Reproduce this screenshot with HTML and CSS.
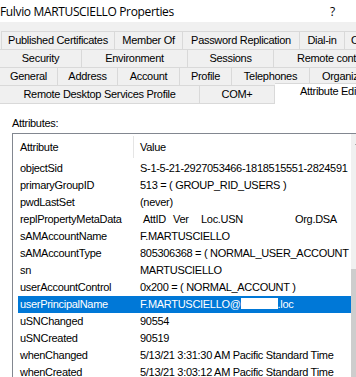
FILE: index.html
```html
<!DOCTYPE html>
<html>
<head>
	<title>Fulvio MARTUSCIELLO Properties</title>
	<link rel="stylesheet" href="styles.css">
</head>
<body>
	<div class="dialog">
		<div class="titlebar">
			<span class="title">Fulvio MARTUSCIELLO Properties</span>
			<span class="help">?</span>
		</div>

		<div class="tabs">
			<div class="tabrow row1">
				<div class="tab w-pub">Published Certificates</div>
				<div class="tab w-mem">Member Of</div>
				<div class="tab w-pwd">Password Replication</div>
				<div class="tab w-dial">Dial-in</div>
				<div class="tab cut pad-obj">Object</div>
			</div>
			<div class="tabrow">
				<div class="tab w-sec">Security</div>
				<div class="tab w-env">Environment</div>
				<div class="tab w-ses">Sessions</div>
				<div class="tab cut pad-rc">Remote control</div>
			</div>
			<div class="tabrow">
				<div class="tab w-gen">General</div>
				<div class="tab w-addr">Address</div>
				<div class="tab w-acc">Account</div>
				<div class="tab w-prof">Profile</div>
				<div class="tab w-tel">Telephones</div>
				<div class="tab cut pad-org">Organization</div>
			</div>
			<div class="tabrow">
				<div class="tab w-rds">Remote Desktop Services Profile</div>
				<div class="tab w-com">COM+</div>
				<div class="tab cut selected pad-attr">Attribute Editor</div>
			</div>
		</div>

		<div class="page">
			<div class="label">Attributes:</div>
			<div class="listview">
				<div class="lv-body">
					<div class="lv-header">
						<div class="hcol first">Attribute</div>
						<div class="hsep"></div>
						<div class="hcol">Value</div>
					</div>
					<div class="lv-row"><div class="c1">objectSid</div><div class="c2">S-1-5-21-2927053466-1818515551-2824591</div></div>
					<div class="lv-row"><div class="c1">primaryGroupID</div><div class="c2">513 = ( GROUP_RID_USERS )</div></div>
					<div class="lv-row"><div class="c1">pwdLastSet</div><div class="c2">(never)</div></div>
					<div class="lv-row"><div class="c1">replPropertyMetaData</div><div class="c2 meta"><span class="m-att">AttID</span><span class="m-ver">Ver</span><span class="m-usn">Loc.USN</span><span>Org.DSA</span></div></div>
					<div class="lv-row"><div class="c1">sAMAccountName</div><div class="c2">F.MARTUSCIELLO</div></div>
					<div class="lv-row"><div class="c1">sAMAccountType</div><div class="c2">805306368 = ( NORMAL_USER_ACCOUNT )</div></div>
					<div class="lv-row"><div class="c1">sn</div><div class="c2">MARTUSCIELLO</div></div>
					<div class="lv-row"><div class="c1">userAccountControl</div><div class="c2">0x200 = ( NORMAL_ACCOUNT )</div></div>
					<div class="lv-row active"><div class="c1">userPrincipalName</div><div class="c2">F.MARTUSCIELLO@<span class="redact"></span>.loc</div></div>
					<div class="lv-row"><div class="c1">uSNChanged</div><div class="c2">90554</div></div>
					<div class="lv-row"><div class="c1">uSNCreated</div><div class="c2">90519</div></div>
					<div class="lv-row"><div class="c1">whenChanged</div><div class="c2">5/13/21 3:31:30 AM Pacific Standard Time</div></div>
					<div class="lv-row"><div class="c1">whenCreated</div><div class="c2">5/13/21 3:03:12 AM Pacific Standard Time</div></div>
				</div>
				<div class="vscroll">
					<div class="sb-btn">
						<svg width="9" height="5" viewBox="0 0 9 5"><path d="M0.5 4.5 L4.5 0.5 L8.5 4.5" fill="none" stroke="#606060" stroke-width="1"/></svg>
					</div>
					<div class="sb-track"></div>
					<div class="sb-thumb"></div>
				</div>
			</div>
		</div>
	</div>
</body>
</html>
```

FILE: styles.css
```css
html, body {
	margin: 0;
	padding: 0;
	width: 356px;
	height: 377px;
	overflow: hidden;
	background-color: #ffffff;
}

body {
	font-family: "Liberation Sans", Arial, sans-serif;
	font-size: 11px;
	letter-spacing: -0.3px;
	color: #000000;
}

.dialog {
	width: 430px;
}

/* title bar */
.titlebar {
	height: 22px;
	display: flex;
	align-items: center;
	background-color: #ffffff;
	font-family: "Open Sans", "Noto Sans", sans-serif;
	font-size: 12px;
	letter-spacing: -0.35px;
}

.title {
	margin-left: 0;
	width: 330px;
	white-space: nowrap;
}

.help {
	font-size: 12px;
}

/* tab strip */
.tabs {
	background-color: #f0f0f0;
	padding-top: 9px;
}

.tabrow {
	display: flex;
	height: 18px;
}

.row1 {
	padding-left: 1px;
}

.tab {
	box-sizing: border-box;
	height: 18px;
	line-height: 16px;
	border-top: 1px solid #d9d9d9;
	border-right: 1px solid #d9d9d9;
	text-align: center;
	white-space: nowrap;
	flex: none;
}

.row1 .tab:first-child {
	border-left: 1px solid #d9d9d9;
}

.tab.cut {
	flex: 1;
	text-align: left;
	border-right: none;
}

.tab.selected {
	position: relative;
	z-index: 1;
	height: 21px;
	margin-top: -2px;
	background-color: #ffffff;
	line-height: 15px;
}

.w-pub { width: 114px; }
.w-mem { width: 68px; }
.w-pwd { width: 117px; }
.w-dial { width: 45px; }
.pad-obj { padding-left: 6px; }

.w-sec { width: 82px; }
.w-env { width: 106px; }
.w-ses { width: 86px; }
.pad-rc { padding-left: 23px; }

.w-gen { width: 58px; }
.w-addr { width: 60px; }
.w-acc { width: 62px; }
.w-prof { width: 52px; }
.w-tel { width: 78px; }
.pad-org { padding-left: 12px; }

.w-rds { width: 200px; }
.w-com { width: 75px; }
.pad-attr { padding-left: 25px; }

/* tab page */
.page {
	border-top: 1px solid #d9d9d9;
	background-color: #ffffff;
	height: 300px;
}

.label {
	margin: 13px 0 0 12px;
	height: 13px;
	line-height: 13px;
}

.listview {
	margin: 3px 0 0 12px;
	border: 1px solid #828790;
	display: flex;
	height: 280px;
}

.lv-body {
	width: 338px;
	flex: none;
}

.lv-header {
	display: flex;
	height: 26px;
	align-items: center;
}

.hcol {
	padding-left: 6px;
}

.hcol.first {
	width: 113px;
	padding-left: 7px;
}

.hsep {
	width: 1px;
	height: 22px;
	background-color: #e5e5e5;
}

.lv-row {
	display: flex;
	height: 17px;
	line-height: 17px;
	margin-left: 5px;
	white-space: nowrap;
}

.lv-row.active {
	background-color: #0078d7;
	color: #ffffff;
}

.c1 {
	width: 118px;
	padding-left: 2px;
	flex: none;
	overflow: hidden;
}

.c2 {
	padding-left: 2px;
	overflow: hidden;
	flex: 1;
}

.meta {
	padding-left: 5px;
}

.m-att {
	display: inline-block;
	width: 30px;
}

.m-ver {
	display: inline-block;
	width: 28px;
}

.m-usn {
	display: inline-block;
	width: 94px;
}

.redact {
	display: inline-block;
	width: 37px;
	height: 11px;
	background-color: #ffffff;
	vertical-align: -1px;
}

/* vertical scrollbar */
.vscroll {
	width: 17px;
	flex: none;
	background-color: #f0f0f0;
	display: flex;
	flex-direction: column;
}

.sb-btn {
	height: 17px;
	display: flex;
	align-items: center;
	justify-content: center;
}

.sb-track {
	height: 118px;
}

.sb-thumb {
	flex: 1;
	margin: 0 1px 0 0;
	background-color: #cdcdcd;
}
```
